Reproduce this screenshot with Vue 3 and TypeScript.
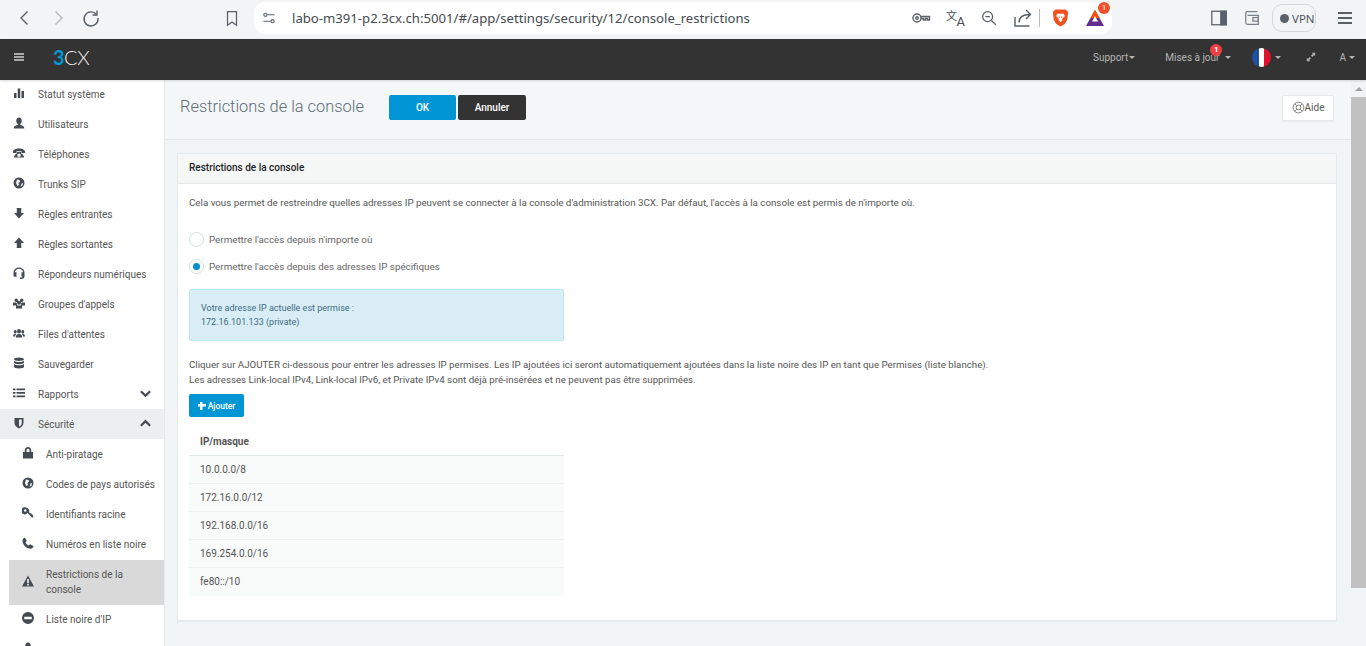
<script setup lang="ts">
interface NavItem {
  label: string
  icon: string
  chevron?: 'up' | 'down'
  open?: boolean
}

const icons: Record<string, string> = {
  bars: 'M2 12h5v10H2zM9.500 3h5v19h-5zM17 8h5v14h-5z',
  user: 'M12 1c3.500 0 5.500 2.700 5.500 6.500 0 3-1.200 5.200-3 6.500v2c3 1 8 1.500 8 7H1.500c0-5.500 5-6 8-7v-2c-1.800-1.300-3-3.500-3-6.500C6.500 3.700 8.500 1 12 1z',
  phone: 'M0 9c0-3 5-6 12-6s12 3 12 6v3h-7V8.500H7V12H0zM8 10h8v2.500c2.500 1.500 6 4 6 8.500H2c0-4.500 3.500-7 6-8.500zm4 3a3.500 3.500 0 1 0 0 7 3.500 3.500 0 0 0 0-7z',
  globe: 'M12 1a11 11 0 1 0 0 22 11 11 0 0 0 0-22zM8 5l5 1 1 3-3 3 1 4-3 2-3-6zm9 8 3-1-1 5-4 3z',
  down: 'M7.500 2h9v10H22L12 23 2 12h5.500z',
  up: 'M12 1l10 11h-5.500v10h-9V12H2z',
  headset: 'M12 1C5.500 1 1 5.500 1 12v5c0 1.200 1 2.500 2.500 2.500H7V10.500H3.800C4.500 6.500 7.800 3.500 12 3.500s7.500 3 8.200 7H17v9h3c-.500 1-1.800 1.700-3.500 1.700H14V24h2.500c4.500 0 6.500-2.500 6.500-5.500V12C23 5.500 18.500 1 12 1z',
  group: 'M6.500 3a3.500 3.500 0 1 1 0 7 3.500 3.500 0 0 1 0-7zm11 0a3.500 3.500 0 1 1 0 7 3.500 3.500 0 0 1 0-7zM12 7.500a4 4 0 1 1 0 8 4 4 0 0 1 0-8zM0 11h6.500L8 13.500V17H0zm17.500 0H24v6h-8v-3.500zM6 17h12v6H6z',
  people: 'M12 4a4 4.500 0 1 1 0 9 4 4.500 0 0 1 0-9zM4.500 6a3 3.500 0 1 1 0 7 3 3.500 0 0 1 0-7zm15 0a3 3.500 0 1 1 0 7 3 3.500 0 0 1 0-7zM5.500 21c0-5 3-7 6.500-7s6.500 2 6.500 7zM0 19c0-3.500 2-5.500 4.500-5.500L7 14c-2 1-2.800 3-2.800 5zm24 0c0-3.500-2-5.500-4.500-5.500L17 14c2 1 2.800 3 2.800 5z',
  db: 'M12 1c5.500 0 10 1.500 10 3.500S17.500 8 12 8 2 6.500 2 4.500 6.500 1 12 1zM2 7.500C4 9.200 7.500 10 12 10s8-.800 10-2.500V11c0 2-4.500 3.500-10 3.500S2 13 2 11zm0 6.500c2 1.700 5.500 2.500 10 2.500s8-.800 10-2.500v5.500c0 2-4.500 3.500-10 3.500S2 21.500 2 19.500z',
  list: 'M0 3h5v3.500H0zM7 3h17v3.500H7zM0 10h5v3.500H0zM7 10h17v3.500H7zM0 17h5v3.500H0zM7 17h17v3.500H7z',
  shield: 'M3 2h18v10c0 5.500-4.500 8.800-9 11-4.500-2.200-9-5.500-9-11zm9 3v14.500c3-1.700 5.500-4 5.500-7.500V5z',
  lock: 'M12 0c4 0 6.500 2.800 6.500 6.500V10H22v13H2V10h3.500V6.500C5.500 2.800 8 0 12 0zm0 3.500C10 3.500 9 4.800 9 6.500V10h6V6.500c0-1.700-1-3-3-3z',
  key: 'M7.500 1a7 7 0 0 1 6.500 9.500l2 2 2.500-.500.500 2.500 2.500.500.500 3 1 1-2.500 2.500-9.500-9.500A7 7 0 1 1 7.500 1zM6.500 4.500a2.500 2.500 0 1 0 0 5 2.500 2.500 0 0 0 0-5z',
  call: 'M6 1l3.500 7-2.500 2.500c1 3 3.500 5.500 6.500 6.500l2.500-2.500 7 3.500c-.500 3-3 5.500-5.500 5.500C8.500 23.500 1 15.500 1 7c0-2.700 2.500-5.500 5-6z',
  warn: 'M12 1l12 22H0zM10 8v8h4V8zm0 9.500V21h4v-3.500z',
  ban: 'M12 0a12 12 0 1 0 0 24 12 12 0 0 0 0-24zM4.500 9.500h15v5h-15z',
}

const mainItems: NavItem[] = [
  { label: 'Statut système', icon: 'bars' },
  { label: 'Utilisateurs', icon: 'user' },
  { label: 'Téléphones', icon: 'phone' },
  { label: 'Trunks SIP', icon: 'globe' },
  { label: 'Règles entrantes', icon: 'down' },
  { label: 'Règles sortantes', icon: 'up' },
  { label: 'Répondeurs numériques', icon: 'headset' },
  { label: "Groupes d'appels", icon: 'group' },
  { label: "Files d'attentes", icon: 'people' },
  { label: 'Sauvegarder', icon: 'db' },
  { label: 'Rapports', icon: 'list', chevron: 'down' },
  { label: 'Sécurité', icon: 'shield', chevron: 'up', open: true },
]

const subItems = [
  { label: 'Anti-piratage', icon: 'lock' },
  { label: 'Codes de pays autorisés', icon: 'globe' },
  { label: 'Identifiants racine', icon: 'key' },
  { label: 'Numéros en liste noire', icon: 'call' },
  { label: 'Restrictions de la console', icon: 'warn', active: true },
  { label: "Liste noire d'IP", icon: 'ban' },
  { label: '', icon: 'user' },
]

const masks = ['10.0.0.0/8', '172.16.0.0/12', '192.168.0.0/16', '169.254.0.0/16', 'fe80::/10']
</script>

<template>
  <div class="page">
    <div class="browser">
      <div class="nav-btns">
        <svg class="b-ico" viewBox="0 0 20 20"><path d="M12.500 3.500 6 10l6.500 6.500" /></svg>
        <svg class="b-ico dim" viewBox="0 0 20 20"><path d="M7.500 3.500 14 10l-6.500 6.500" /></svg>
        <svg class="b-ico" viewBox="0 0 20 20"><path d="M15.500 6.500A7 7 0 1 0 17 10" /><path d="M16 2.500v4.500h-4.500" /></svg>
      </div>
      <svg class="b-ico bookmark" viewBox="0 0 20 20"><path d="M5 3h10v15l-5-3.500L5 18z" /></svg>
      <div class="urlbar">
        <svg class="b-ico tune" viewBox="0 0 20 20"><circle cx="5.500" cy="6" r="2" /><path d="M8 6h9M3 14h9" /><circle cx="14.500" cy="14" r="2" /></svg>
        <span class="url">labo-m391-p2.3cx.ch:5001/#/app/settings/security/12/console_restrictions</span>
        <div class="url-tools">
          <svg class="b-ico key" viewBox="0 0 20 20"><circle cx="6" cy="10" r="4" /><circle cx="6" cy="10" r="1.200" /><path d="M10 8.500h8.500V12h-2v-1.500h-2V12h-2v-1.500H10" /></svg>
          <span class="translate"><i>文</i><b>A</b></span>
          <svg class="b-ico zoom" viewBox="0 0 20 20"><circle cx="8.500" cy="8.500" r="5.500" /><path d="M6 8.500h5M12.500 12.500 17.500 17.500" /></svg>
          <svg class="b-ico share" viewBox="0 0 20 20"><path d="M2 9v9h14.500M6 14.500c0-5.500 3-8 11-8M13 2l4.500 4.500L13 11" /></svg>
          <span class="sep"></span>
          <svg class="brave" viewBox="0 0 20 22"><path d="M4 1h12l3 3-1 9-3 5-5 3-5-3-3-5-1-9z" fill="#f1501f" /><path d="M6 6h8l1 3-3 3v2l-2 2-2-2v-2L5 9z" fill="#fff" /><path d="M8 9h1v2H8zm3 0h1v2h-1z" fill="#f1501f" /></svg>
          <span class="bat">
            <svg viewBox="0 0 20 18"><path d="M10 1l9 16H1z" fill="#662d91" /><path d="M10 1l4.500 8h-9z" fill="#ff5000" /><path d="M10 7l3 5.500H7z" fill="#fff" /></svg>
            <em>1</em>
          </span>
        </div>
      </div>
      <div class="browser-right">
        <svg class="b-ico sidepanel" viewBox="0 0 20 20"><rect x="2" y="2.500" width="16" height="15" /><rect x="12" y="2.500" width="6" height="15" class="filled" /></svg>
        <svg class="b-ico wallet" viewBox="0 0 20 20"><path d="M16 3H5a2 2 0 0 0-2 2v10a2 2 0 0 0 2 2h12V7H5" /><rect x="11" y="9.500" width="6" height="4" /></svg>
        <div class="vpn"><span class="vpn-dot"></span>VPN</div>
        <div class="burger"><span></span><span></span><span></span></div>
      </div>
    </div>

    <header class="topbar">
      <div class="menu-btn"><span></span><span></span><span></span></div>
      <div class="logo"><span class="three">3</span>CX</div>
      <div class="top-right">
        <span class="top-link support">Support<i class="caret"></i></span>
        <span class="top-link updates">Mises à jour<em class="badge">1</em><i class="caret far"></i></span>
        <span class="top-link lang"><span class="flag"></span><i class="caret"></i></span>
        <svg class="expand" viewBox="0 0 12 12"><path d="M7 1h4v4L9.700 3.700 7.500 6 6 4.500l2.300-2.200zM5 11H1V7l1.300 1.300L4.500 6 6 7.500 3.700 9.700z" /></svg>
        <span class="top-link user-menu">A<i class="caret"></i></span>
      </div>
    </header>

    <div class="body-row">
      <aside class="sidebar">
        <div
          v-for="item in mainItems"
          :key="item.label"
          class="nav-row"
          :class="{ open: item.open }"
        >
          <svg class="nav-ico" viewBox="0 0 24 24"><path :d="icons[item.icon]" fill-rule="evenodd" /></svg>
          <span>{{ item.label }}</span>
          <svg v-if="item.chevron" class="chev" viewBox="0 0 12 8">
            <path :d="item.chevron === 'down' ? 'M1 2l5 5 5-5' : 'M1 7l5-5 5 5'" />
          </svg>
        </div>
        <div
          v-for="sub in subItems"
          :key="sub.icon + sub.label"
          class="nav-sub"
          :class="{ active: sub.active }"
        >
          <svg class="nav-ico" viewBox="0 0 24 24"><path :d="icons[sub.icon]" fill-rule="evenodd" /></svg>
          <span>{{ sub.label }}</span>
        </div>
      </aside>

      <main class="content">
        <div class="page-head">
          <h1>Restrictions de la console</h1>
          <button class="btn btn-ok">OK</button>
          <button class="btn btn-cancel">Annuler</button>
          <button class="btn-help">
            <svg viewBox="0 0 14 14"><circle cx="7" cy="7" r="5.800" /><circle cx="7" cy="7" r="2.600" /><path d="M3 3l2.200 2.200M11 3 8.800 5.200M3 11l2.200-2.200M11 11 8.800 8.800" /></svg>
            Aide
          </button>
        </div>

        <section class="card">
          <div class="card-head">Restrictions de la console</div>
          <div class="card-body">
            <p class="intro">Cela vous permet de restreindre quelles adresses IP peuvent se connecter à la console d'administration 3CX. Par défaut, l'accès à la console est permis de n'importe où.</p>
            <label class="radio"><span class="dot"></span>Permettre l'accès depuis n'importe où</label>
            <label class="radio"><span class="dot on"></span>Permettre l'accès depuis des adresses IP spécifiques</label>
            <div class="alert">
              <div>Votre adresse IP actuelle est permise :</div>
              <div>172.16.101.133 (private)</div>
            </div>
            <p class="help">Cliquer sur AJOUTER ci-dessous pour entrer les adresses IP permises. Les IP ajoutées ici seront automatiquement ajoutées dans la liste noire des IP en tant que Permises (liste blanche).<br />Les adresses Link-local IPv4, Link-local IPv6, et Private IPv4 sont déjà pré-insérées et ne peuvent pas être supprimées.</p>
            <button class="btn-add"><span class="plus"></span>Ajouter</button>
            <div class="table">
              <div class="th">IP/masque</div>
              <div v-for="mask in masks" :key="mask" class="td">{{ mask }}</div>
            </div>
          </div>
        </section>
      </main>

      <div class="scrollbar">
        <span class="arrow"></span>
        <span class="thumb"></span>
      </div>
    </div>
  </div>
</template>

<style scoped>
.page {
  width: 1366px;
  height: 646px;
  overflow: hidden;
  display: flex;
  flex-direction: column;
  font-family: Roboto, "Noto Sans", sans-serif;
  color: #555;
}

/* browser chrome */
.browser {
  height: 39px;
  flex: none;
  background: #f3f4f6;
  display: flex;
  align-items: center;
  box-sizing: border-box;
  padding: 0 0 3px 15px;
}
.nav-btns {
  display: flex;
  gap: 13px;
  width: 208px;
}
.b-ico {
  width: 20px;
  height: 20px;
  fill: none;
  stroke: #5a6068;
  stroke-width: 1.400;
  flex: none;
}
.dim {
  stroke: #b4b9bf;
}
.bookmark {
  width: 18px;
  margin-right: 13px;
}
.urlbar {
  width: 858px;
  height: 32px;
  background: #fff;
  border-radius: 11px;
  display: flex;
  align-items: center;
  padding-left: 7px;
  box-sizing: border-box;
}
.tune {
  width: 16px;
  height: 16px;
  margin-right: 15px;
}
.url {
  font-family: "Noto Sans", sans-serif;
  font-size: 13.150px;
  color: #454b52;
  white-space: nowrap;
}
.url-tools {
  margin-left: auto;
  display: flex;
  align-items: center;
  padding-right: 7px;
}
.translate {
  width: 18px;
  height: 20px;
  margin-left: 15px;
  position: relative;
  font-size: 11px;
  color: #454b52;
  flex: none;
}
.translate i {
  position: absolute;
  left: 0;
  top: -1px;
  font-style: normal;
  font-family: "Noto Sans CJK SC", sans-serif;
}
.translate b {
  position: absolute;
  right: -1px;
  bottom: 0;
  font-weight: 400;
  font-size: 13px;
  line-height: 13px;
}
.zoom {
  width: 18px;
  margin-left: 16px;
}
.share {
  margin-left: 15px;
}
.sep {
  width: 1px;
  height: 18px;
  background: #b8bcc2;
  margin-left: 6px;
}
.brave {
  width: 17px;
  height: 20px;
  margin-left: 12px;
  flex: none;
}
.bat {
  position: relative;
  width: 20px;
  height: 18px;
  margin-left: 16px;
  flex: none;
}
.bat svg {
  width: 20px;
  height: 18px;
  display: block;
}
.bat em {
  position: absolute;
  right: -5px;
  top: -7px;
  width: 12px;
  height: 12px;
  border-radius: 50%;
  background: #f1502f;
  color: #fff;
  font-size: 8px;
  font-style: normal;
  line-height: 12px;
  text-align: center;
}
.browser-right {
  display: flex;
  align-items: center;
  margin-left: 98px;
}
.sidepanel {
  width: 18px;
  height: 18px;
}
.filled {
  fill: #5a6068;
}
.wallet {
  width: 18px;
  height: 18px;
  margin-left: 15px;
  stroke: #7a8087;
}
.vpn {
  width: 44px;
  height: 28px;
  margin-left: 11px;
  box-sizing: border-box;
  border: 1px solid #d5d8dc;
  border-radius: 10px;
  display: flex;
  align-items: center;
  gap: 3px;
  padding-left: 7px;
  font-family: "Noto Sans", sans-serif;
  font-size: 11.500px;
  color: #50565d;
  flex: none;
}
.vpn-dot {
  width: 9px;
  height: 9px;
  border-radius: 50%;
  background: #5a6068;
  flex: none;
}
.burger {
  margin-left: 22px;
  width: 14px;
  display: flex;
  flex-direction: column;
  gap: 3.500px;
}
.burger span {
  height: 1.500px;
  background: #5a6068;
}

/* app header */
.topbar {
  height: 41px;
  flex: none;
  box-sizing: border-box;
  padding-bottom: 5px;
  background: #333;
  display: flex;
  align-items: center;
  box-shadow: 0 1px 2px rgba(0, 0, 0, 0.15);
  position: relative;
  z-index: 2;
}
.menu-btn {
  width: 10px;
  margin-left: 14px;
  display: flex;
  flex-direction: column;
  gap: 1.500px;
}
.menu-btn span {
  height: 1.500px;
  background: #aaa;
}
.logo {
  margin-left: 29px;
  font-family: "Lato", sans-serif;
  font-weight: 300;
  font-size: 20px;
  letter-spacing: -0.5px;
  color: #eee;
}
.three {
  color: #0096d6;
  font-weight: 700;
}
.top-right {
  margin-left: auto;
  display: flex;
  align-items: center;
  height: 100%;
}
.top-link {
  font-size: 10px;
  color: #b5b5b5;
  display: flex;
  align-items: center;
  position: relative;
}
.caret {
  width: 0;
  height: 0;
  border-left: 3.500px solid transparent;
  border-right: 3.500px solid transparent;
  border-top: 3.500px solid #b5b5b5;
  margin-left: 1px;
}
.far {
  margin-left: 6px;
}
.support {
  margin-right: 30px;
}
.updates {
  margin-right: 21px;
}
.badge {
  position: absolute;
  left: 45px;
  top: -8px;
  width: 12px;
  height: 12px;
  border-radius: 50%;
  background: #ef4044;
  color: #fff;
  font-style: normal;
  font-weight: 700;
  font-size: 8px;
  line-height: 12px;
  text-align: center;
}
.flag {
  width: 19px;
  height: 19px;
  border-radius: 50%;
  background: linear-gradient(90deg, #1d4fa3 0 35%, #fff 35% 65%, #e0112b 65%);
  margin-right: 3px;
}
.expand {
  width: 10px;
  height: 10px;
  fill: #b5b5b5;
  margin-left: 25px;
}
.user-menu {
  margin-left: 23px;
  margin-right: 11px;
}
.user-menu .caret {
  margin-left: 3px;
}

.body-row {
  flex: 1;
  display: flex;
  min-height: 0;
}

/* sidebar */
.sidebar {
  width: 165px;
  flex: none;
  box-sizing: border-box;
  background: #fff;
  border-right: 1px solid #e4eaec;
  overflow: hidden;
  font-size: 10px;
  color: #555;
}
.nav-row {
  height: 30px;
  display: flex;
  align-items: center;
  padding-left: 13px;
  margin-top: -1px;
  margin-bottom: 1px;
  position: relative;
}
.nav-row.open {
  background: #ebeff0;
}
.nav-sub {
  height: 30px;
  display: flex;
  align-items: center;
  margin-left: 9px;
  padding: 0 0 2px 13px;
  box-sizing: border-box;
  line-height: 15px;
  position: relative;
}
.nav-sub.active {
  height: auto;
  background: #d9d9d9;
  padding: 7px 30px 8px 13px;
}
.nav-ico {
  width: 12px;
  height: 12px;
  fill: #444b55;
  flex: none;
  margin-right: 13px;
  position: relative;
  top: -1px;
}
.nav-sub .nav-ico {
  margin-right: 12px;
}
.chev {
  position: absolute;
  right: 13px;
  top: 10px;
  width: 11px;
  height: 8px;
  fill: none;
  stroke: #444b55;
  stroke-width: 2.400;
}

/* main */
.content {
  flex: 1;
  min-width: 0;
  background: #f1f4f5;
}
.page-head {
  height: 60px;
  box-sizing: border-box;
  border-bottom: 1px solid #e4eaec;
  background: #f3f7f8;
  display: flex;
  align-items: flex-start;
  padding: 15px 17px 0 15px;
}
h1 {
  margin: 1px 0 0;
  font-size: 16.400px;
  font-weight: 300;
  color: #5f6b75;
  line-height: 22px;
  width: 209px;
  white-space: nowrap;
}
.btn {
  height: 25px;
  border: 0;
  border-radius: 2px;
  font-family: inherit;
  font-size: 10px;
  font-weight: 500;
  color: #fff;
}
.btn-ok {
  width: 67px;
  background: #0096d6;
}
.btn-cancel {
  width: 68px;
  margin-left: 2px;
  background: #333;
}
.btn-help {
  margin-left: auto;
  width: 52px;
  height: 26px;
  background: #fff;
  border: 1px solid #e4eaec;
  border-radius: 2px;
  box-shadow: 0 1px 1px rgba(0, 0, 0, 0.05);
  font-family: inherit;
  font-size: 10px;
  color: #555;
  display: flex;
  align-items: center;
  justify-content: center;
  gap: 0;
  padding: 0 0 2px;
}
.btn-help svg {
  width: 13px;
  height: 13px;
  fill: none;
  stroke: #777;
  stroke-width: 1;
}
.card {
  margin: 13px 14px 0 12px;
  height: 469px;
  box-sizing: border-box;
  background: #fff;
  border: 1px solid #e4eaec;
  border-bottom-width: 2px;
}
.card-head {
  height: 30px;
  box-sizing: border-box;
  background: #f5f7f7;
  border-bottom: 1px solid #e4eaec;
  padding-left: 11px;
  font-size: 10px;
  font-weight: 500;
  color: #1f2428;
  line-height: 28px;
}
.card-body {
  padding: 11px 11px 0;
  font-size: 10px;
  color: #555;
}
p {
  margin: 0;
}
.intro {
  font-size: 9.780px;
  line-height: 15px;
  margin-bottom: 21px;
}
.radio {
  display: flex;
  align-items: center;
  height: 16px;
  margin-bottom: 11px;
  font-size: 9.800px;
  color: #666;
}
.dot {
  width: 15px;
  height: 15px;
  box-sizing: border-box;
  border-radius: 50%;
  border: 1px solid #d5dcdf;
  background: #fff;
  margin-right: 5px;
  position: relative;
  flex: none;
}
.dot.on::after {
  content: "";
  position: absolute;
  left: 3px;
  top: 3px;
  width: 7px;
  height: 7px;
  border-radius: 50%;
  background: #0090d0;
}
.alert {
  width: 375px;
  height: 52px;
  box-sizing: border-box;
  margin-top: 15px;
  padding: 11px 11px 0;
  background: #d9edf7;
  border: 1px solid #bce8f1;
  border-radius: 2px;
  font-size: 9px;
  line-height: 14px;
  color: #3f6b80;
}
.help {
  font-size: 9.720px;
  margin-top: 16px;
  line-height: 15px;
}
.btn-add {
  display: flex;
  align-items: center;
  justify-content: center;
  width: 55px;
  height: 23px;
  margin-top: 7px;
  padding: 0;
  border: 0;
  border-radius: 2px;
  background: #0096d6;
  color: #fff;
  font-family: inherit;
  font-size: 8.500px;
  font-weight: 500;
}
.plus {
  width: 8px;
  height: 8px;
  margin-right: 2px;
  background:
    linear-gradient(#fff, #fff) center / 8px 2.500px no-repeat,
    linear-gradient(#fff, #fff) center / 2.500px 8px no-repeat;
}
.table {
  width: 375px;
  margin-top: 11px;
}
.th {
  height: 28px;
  box-sizing: border-box;
  padding: 0 11px;
  font-weight: 700;
  line-height: 27px;
  color: #555;
  border-bottom: 1px solid #e4eaec;
}
.td {
  height: 28px;
  box-sizing: border-box;
  padding: 0 11px;
  line-height: 27px;
  background: #f9fafa;
  border-bottom: 1px solid #eef1f2;
}
.td:last-child {
  border-bottom: 0;
}

.scrollbar {
  width: 15px;
  flex: none;
  background: #f1f4f5;
  display: flex;
  flex-direction: column;
  align-items: center;
}
.arrow {
  margin-top: 7px;
  width: 0;
  height: 0;
  border-left: 4px solid transparent;
  border-right: 4px solid transparent;
  border-bottom: 4px solid #a3a3a3;
}
.thumb {
  margin-top: 6px;
  width: 15px;
  height: 491px;
  background: #c1c1c1;
}
</style>

<style>
html,
body {
  margin: 0;
  overflow: hidden;
}
</style>
